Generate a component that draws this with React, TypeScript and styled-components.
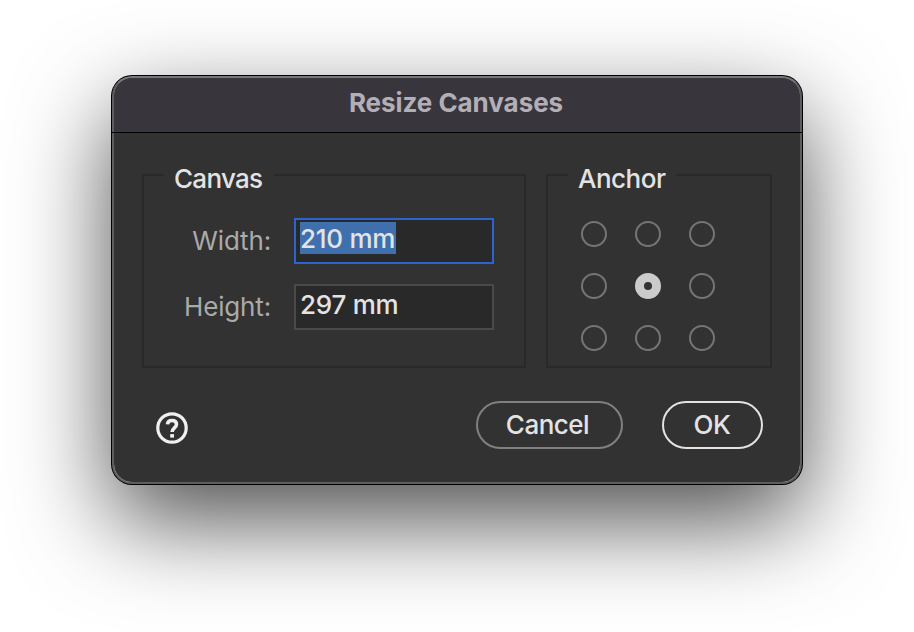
import React, { useState } from "react";
import styled, { createGlobalStyle } from "styled-components";

const GlobalStyle = createGlobalStyle`
  * { box-sizing: border-box; }
  body {
    margin: 0;
    background: #fff;
    font-family: Inter, "Liberation Sans", sans-serif;
    font-size: 26px;
    font-weight: 450;
    color: #e3e3e3;
    overflow: hidden;
    -webkit-font-smoothing: antialiased;
  }
`;

const Desktop = styled.main`
  width: 914px;
  height: 632px;
  padding: 76px 112px 0;
`;

const Dialog = styled.section`
  display: flex;
  flex-direction: column;
  width: 690px;
  height: 408px;
  border: 2px solid #5e5e5e;
  border-top-color: #77767a;
  border-radius: 20px;
  background: #323232;
  background-clip: padding-box;
  box-shadow: 0 0 0 1px #000, 0 36px 96px rgba(0, 0, 0, 0.7);
`;

const TitleBar = styled.header`
  display: flex;
  align-items: center;
  justify-content: center;
  height: 54px;
  padding-bottom: 4px;
  border-radius: 18px 18px 0 0;
  background: #39353d;
`;

const Divider = styled.div`
  height: 1px;
  margin: 0 -2px;
  background: #000;
`;

const Title = styled.h1`
  margin: 0 2px 0 0;
  font-size: 26px;
  font-weight: 700;
  line-height: 32px;
  letter-spacing: -0.05px;
  color: #b3afb7;
`;

const Groups = styled.div`
  display: flex;
  gap: 20px;
  padding: 26px 28px 0;
`;

const Group = styled.fieldset<{ $width: number }>`
  width: ${(p) => p.$width}px;
  height: 209px;
  margin: 0;
  padding: 0 0 0 20px;
  border: 2px solid #292929;
`;

const Legend = styled.legend<{ $width: number; $spacing: number }>`
  width: ${(p) => p.$width}px;
  height: 32px;
  padding: 8px 0 0 10px;
  line-height: 24px;
  letter-spacing: ${(p) => p.$spacing}px;
  white-space: nowrap;
`;

const Fields = styled.div`
  display: grid;
  gap: 20px;
  padding-top: 27px;
`;

const Field = styled.label`
  display: grid;
  grid-template-columns: 108px 200px;
  column-gap: 22px;
`;

const FieldName = styled.span`
  padding: 6px 1px 0 0;
  font-weight: 420;
  line-height: 34px;
  letter-spacing: -0.15px;
  text-align: right;
  color: #aaa;
`;

const ValueBox = styled.span<{ $focused?: boolean }>`
  display: flex;
  align-items: flex-start;
  height: 46px;
  padding: 2px 4px;
  border: 2px solid ${(p) => (p.$focused ? "#2b64cd" : "#4a4a4a")};
  background: #292929;
`;

const Value = styled.span<{ $selected?: boolean }>`
  height: 32px;
  padding: 1px ${(p) => (p.$selected ? 1 : 0)}px 0 0;
  line-height: 32px;
  letter-spacing: -0.25px;
  white-space: nowrap;
  background: ${(p) => (p.$selected ? "#3f70ad" : "transparent")};
`;

const AnchorGrid = styled.div`
  display: grid;
  grid-template-columns: repeat(3, 26px);
  gap: 26px 28px;
  padding: 30px 0 0 13px;
`;

const Radio = styled.button<{ $checked: boolean }>`
  width: 26px;
  height: 26px;
  padding: 0;
  border: ${(p) => (p.$checked ? "9px solid #cbcbcb" : "2px solid #757575")};
  border-radius: 50%;
  background: transparent;
`;

const Footer = styled.footer`
  display: flex;
  align-items: flex-start;
  padding: 33px 37.5px 0 42px;
`;

const HelpIcon = styled.svg`
  width: 32px;
  height: 32px;
  margin: 11px auto 0 0;
`;

const PillButton = styled.button<{ $width: number; $primary?: boolean }>`
  width: ${(p) => p.$width}px;
  height: 48px;
  margin-left: ${(p) => (p.$primary ? 39 : 0)}px;
  padding: 0 ${(p) => (p.$primary ? 0 : 3)}px 0 0;
  border: 2px solid ${(p) => (p.$primary ? "#e3e3e3" : "#808080")};
  border-radius: 24px;
  background: transparent;
  color: #e3e3e3;
  font: inherit;
  line-height: 44px;
  letter-spacing: -0.5px;
`;

const anchors = ["nw", "n", "ne", "w", "center", "e", "sw", "s", "se"];

export default function App() {
  const [anchor, setAnchor] = useState("center");
  return (
    <>
      <GlobalStyle />
      <Desktop>
        <Dialog role="dialog">
          <TitleBar>
            <Title>Resize Canvases</Title>
          </TitleBar>
          <Divider />
          <Groups>
            <Group $width={384}>
              <Legend $width={110} $spacing={-0.7}>Canvas</Legend>
              <Fields>
                <Field>
                  <FieldName>Width:</FieldName>
                  <ValueBox $focused>
                    <Value $selected>210 mm</Value>
                  </ValueBox>
                </Field>
                <Field>
                  <FieldName>Height:</FieldName>
                  <ValueBox>
                    <Value>297 mm</Value>
                  </ValueBox>
                </Field>
              </Fields>
            </Group>
            <Group $width={226}>
              <Legend $width={108} $spacing={-0.5}>Anchor</Legend>
              <AnchorGrid>
                {anchors.map((a) => (
                  <Radio key={a} aria-label={a} $checked={a === anchor} onClick={() => setAnchor(a)} />
                ))}
              </AnchorGrid>
            </Group>
          </Groups>
          <Footer>
            <HelpIcon viewBox="0 0 32 32" fill="none" stroke="#f0f0f0">
              <circle cx="16" cy="16" r="14.2" strokeWidth="3.2" />
              <path d="M11.500 12.400C11.600 9.900 13.300 8.500 16 8.500c2.800 0 4.500 1.500 4.500 3.800 0 3.600-4.400 3.400-4.400 7.700" strokeWidth="3.600" />
              <path d="M16.100 22.100v3.500" strokeWidth="3.800" />
            </HelpIcon>
            <PillButton $width={147}>Cancel</PillButton>
            <PillButton $width={101} $primary>OK</PillButton>
          </Footer>
        </Dialog>
      </Desktop>
    </>
  );
}
